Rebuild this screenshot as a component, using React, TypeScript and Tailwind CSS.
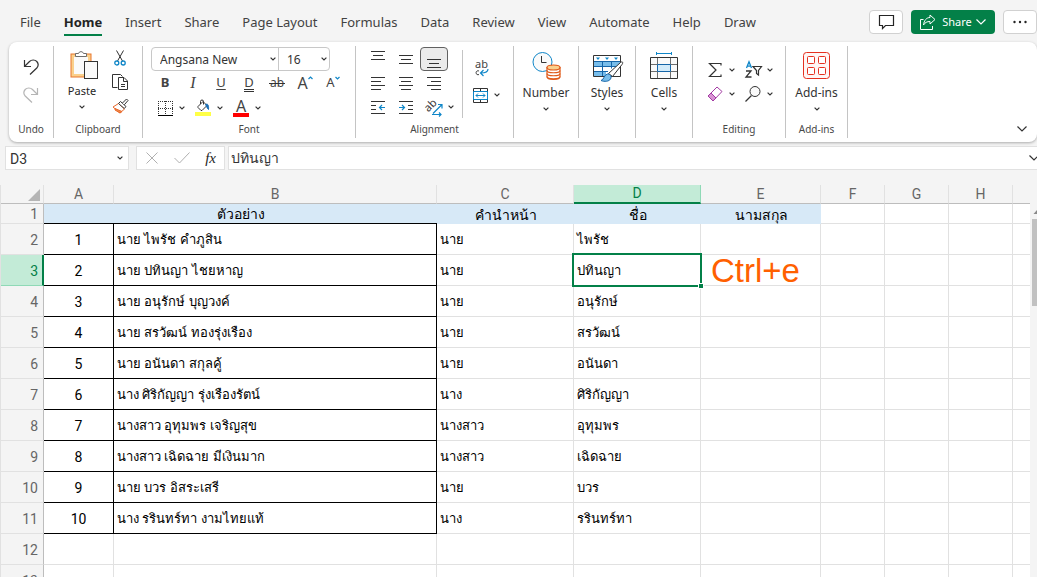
import { useState } from "react";
import type { ReactNode } from "react";

const tabs = [
  "File",
  "Home",
  "Insert",
  "Share",
  "Page Layout",
  "Formulas",
  "Data",
  "Review",
  "View",
  "Automate",
  "Help",
  "Draw",
];

const columns = ["A", "B", "C", "D", "E", "F", "G", "H"];

const people = [
  { full: "นาย ไพรัช คำภูสิน", title: "นาย", first: "ไพรัช" },
  { full: "นาย ปทินญา ไชยหาญ", title: "นาย", first: "ปทินญา" },
  { full: "นาย อนุรักษ์ บุญวงค์", title: "นาย", first: "อนุรักษ์" },
  { full: "นาย สรวัฒน์ ทองรุ่งเรือง", title: "นาย", first: "สรวัฒน์" },
  { full: "นาย อนันดา สกุลคู้", title: "นาย", first: "อนันดา" },
  { full: "นาง ศิริกัญญา รุ่งเรืองรัตน์", title: "นาง", first: "ศิริกัญญา" },
  { full: "นางสาว อุทุมพร เจริญสุข", title: "นางสาว", first: "อุทุมพร" },
  { full: "นางสาว เฉิดฉาย มีเงินมาก", title: "นางสาว", first: "เฉิดฉาย" },
  { full: "นาย บวร อิสระเสรี", title: "นาย", first: "บวร" },
  { full: "นาง รรินทร์ทา งามไทยแท้", title: "นาง", first: "รรินทร์ทา" },
];

function Svg({ w, h, children }: { w: number; h: number; children: ReactNode }) {
  return (
    <svg
      width={w}
      height={h}
      viewBox={`0 0 ${w} ${h}`}
      fill="none"
      stroke="#333"
      className="shrink-0 overflow-visible"
      aria-hidden="true"
    >
      {children}
    </svg>
  );
}

function Chevron() {
  return (
    <Svg w={6} h={4}>
      <path d="M.6 .6 3 3 5.4 .6" strokeWidth="1.2" />
    </Svg>
  );
}

function BigChevron({ color = "#333" }: { color?: string }) {
  return (
    <Svg w={10} h={6}>
      <path d="M.5 .5 5 5 9.5 .5" stroke={color} strokeWidth="1.2" />
    </Svg>
  );
}

function IconButton({
  label,
  pressed,
  children,
}: {
  label: string;
  pressed?: boolean;
  children: ReactNode;
}) {
  return (
    <button
      type="button"
      aria-label={label}
      aria-pressed={pressed}
      className={
        pressed
          ? "flex h-6 w-7 shrink-0 items-center justify-center rounded border border-[#616161] bg-[#ebebeb]"
          : "flex h-6 w-7 shrink-0 items-center justify-center rounded hover:bg-gray-100"
      }
    >
      {children}
    </button>
  );
}

function MenuButton({ label }: { label: string }) {
  return (
    <button
      type="button"
      aria-label={label}
      className="flex h-6 w-2.5 shrink-0 items-center justify-start hover:bg-gray-100"
    >
      <Chevron />
    </button>
  );
}

function Group({
  label,
  width,
  children,
}: {
  label?: string;
  width: string;
  children: ReactNode;
}) {
  return (
    <section
      className={`flex h-[92px] shrink-0 flex-col border-r border-[#c4c4c4] ${width}`}
    >
      <div className="flex h-[76px]">{children}</div>
      {label && (
        <div className="text-center text-[10px] leading-[14px] text-[#484848]">
          {label}
        </div>
      )}
    </section>
  );
}

function LargeButton({ label, children }: { label: string; children: ReactNode }) {
  return (
    <button
      type="button"
      className="flex h-[72px] w-full flex-col items-center text-xs leading-4 text-[#333]"
    >
      <span className="flex h-[39px] items-center justify-center">{children}</span>
      {label}
      <span className="flex h-4 items-center">
        <Chevron />
      </span>
    </button>
  );
}

function AlignLines({ widths, align }: { widths: number[]; align: string }) {
  return (
    <Svg w={16} h={13}>
      {widths.map((w, i) => {
        const x = align === "left" ? 1 : align === "right" ? 15 - w : 8 - w / 2;
        return <path key={i} d={`M${x} ${0.5 + i * 4}h${w}`} />;
      })}
    </Svg>
  );
}

function PasteIcon() {
  return (
    <Svg w={28} h={31}>
      <rect x="1" y="5" width="20" height="23" fill="#fad08c" stroke="#e8762c" />
      <rect x="4" y="8" width="14" height="17" fill="#fafafa" stroke="none" />
      <path
        d="M5.500 7.500V4.500H8.500a2.600 2.600 0 0 1 5 0h3v3z"
        fill="#fff"
        stroke="#6e6e6e"
      />
      <rect x="14.500" y="12.500" width="13" height="17" fill="#fafafa" />
    </Svg>
  );
}

function CutIcon() {
  return (
    <Svg w={12} h={16}>
      <path d="M2.500.5 8.500 11M9.500.5 3.500 11" />
      <circle cx="2.800" cy="13" r="2" stroke="#0f86c8" strokeWidth="1.300" />
      <circle cx="9.200" cy="13" r="2" stroke="#0f86c8" strokeWidth="1.300" />
    </Svg>
  );
}

function CopyIcon() {
  return (
    <Svg w={16} h={16}>
      <path d="M5.500 13.500h-5V.5h8l2 2" />
      <path d="M6.500 3.500h5.500l3.500 3.500v8.500h-9zM11.500 3.500V7.500h4M9 10.500h4M9 12.500h4" />
    </Svg>
  );
}

function PainterIcon() {
  return (
    <Svg w={17} h={16}>
      <path d="M1 9 6.500 5.500 12.500 11 8 15z" fill="#fff" stroke="#e8692c" />
      <path d="M3 10.500 10 13.500 8 15 3 12z" fill="#f08a4b" stroke="#e8692c" />
      <path d="M6.500 5.500 8.500 3.500 14 8.500 12.300 10.500z" fill="#fff" />
      <path d="M10.500 5 14.500 1l1.500 1.500L12.300 6.800" fill="#fff" />
    </Svg>
  );
}

function ClipboardGroup() {
  return (
    <Group label="Clipboard" width="w-[89px]">
      <button
        type="button"
        aria-label="Paste"
        className="ml-2 flex h-[70px] w-10 flex-col items-center text-[11px] leading-4 text-[#262626]"
      >
        <span className="flex h-[37px] items-end pl-1">
          <span className="h-[34px]">
            <PasteIcon />
          </span>
        </span>
        Paste
        <span className="flex h-4 items-center">
          <Chevron />
        </span>
      </button>
      <div className="ml-1 flex flex-col">
        <IconButton label="Cut">
          <CutIcon />
        </IconButton>
        <IconButton label="Copy">
          <CopyIcon />
        </IconButton>
        <IconButton label="Format Painter">
          <PainterIcon />
        </IconButton>
      </div>
    </Group>
  );
}

function FontGroup() {
  return (
    <Group label="Font" width="w-[213px]">
      <div className="flex flex-col pt-px pl-2">
        <div className="flex h-6 w-[179px] items-stretch rounded border border-[#c8c8c8] text-xs text-[#333]">
          <div className="relative w-[127px] border-r border-[#c8c8c8]">
            <select
              aria-label="Font name"
              className="h-full w-full appearance-none bg-transparent pt-0.5 pl-2 outline-none"
            >
              <option>Angsana New</option>
            </select>
            <span className="pointer-events-none absolute top-[9px] right-0.5">
              <Chevron />
            </span>
          </div>
          <div className="relative flex-1">
            <select
              aria-label="Font size"
              className="h-full w-full appearance-none bg-transparent pt-0.5 pl-2 outline-none"
            >
              <option>16</option>
            </select>
            <span className="pointer-events-none absolute top-[9px] right-0.5">
              <Chevron />
            </span>
          </div>
        </div>
        <div className="flex text-[13px] text-[#444]">
          <IconButton label="Bold">
            <b>B</b>
          </IconButton>
          <IconButton label="Italic">
            <i className="font-['Liberation_Serif',serif] text-base leading-4">I</i>
          </IconButton>
          <IconButton label="Underline">
            <span className="underline underline-offset-2">U</span>
          </IconButton>
          <IconButton label="Double underline">
            <span className="border-b-3 border-double border-[#333] leading-[14px]">
              D
            </span>
          </IconButton>
          <IconButton label="Strikethrough">
            <span className="relative text-xs">
              ab
              <span className="absolute top-1/2 -left-px h-px w-4 bg-[#333]" />
            </span>
          </IconButton>
          <IconButton label="Increase font size">
            <span className="text-base">A</span>
            <span className="-mt-2.5">
              <Svg w={5} h={4}>
                <path d="M.5 3 2.500 1l2 2" stroke="#0f86c8" strokeWidth="1.200" />
              </Svg>
            </span>
          </IconButton>
          <IconButton label="Decrease font size">
            <span>A</span>
            <span className="-mt-2.5">
              <Svg w={5} h={4}>
                <path d="M.5 1 2.500 3l2-2" stroke="#0f86c8" strokeWidth="1.200" />
              </Svg>
            </span>
          </IconButton>
        </div>
        <div className="flex pt-px">
          <IconButton label="Borders">
            <Svg w={15} h={15}>
              <path
                d="M.5 0v13M7.500 0v13M14.500 0v13M0 .5h15M0 7.500h15"
                strokeDasharray="1 1"
              />
              <path d="M0 14.500h15" stroke="#000" />
            </Svg>
          </IconButton>
          <MenuButton label="Border options" />
          <IconButton label="Fill color">
            <Svg w={16} h={16}>
              <path d="M3 6.500 8 1.500l4 4-5 5H6l-3-3z" />
              <path d="M8.500 4.500V1.500a1.500 1.500 0 0 0-3 0V4" />
              <path
                d="M10.500 4.500c2-1 3.500 0 3 5-1.500-1-1.500-2.500-3-5z"
                fill="#1a6fb5"
                stroke="#1a6fb5"
              />
              <path d="M0 14h16" stroke="#ffff46" strokeWidth="4" />
            </Svg>
          </IconButton>
          <MenuButton label="Fill color options" />
          <IconButton label="Font color">
            <span className="flex w-4 flex-col items-center border-b-4 border-[#f00] text-base leading-[13px] text-[#444]">
              A
            </span>
          </IconButton>
          <MenuButton label="Font color options" />
        </div>
      </div>
    </Group>
  );
}

function AlignmentGroup() {
  return (
    <Group label="Alignment" width="w-[158px]">
      <div className="flex w-[98px] flex-col pt-px pl-2">
        <div className="flex">
          <IconButton label="Top align">
            <span className="-mt-2">
              <Svg w={16} h={9}>
                <path d="M1 .5h14M3 4.500h10M1 8.500h14" />
              </Svg>
            </span>
          </IconButton>
          <IconButton label="Middle align">
            <Svg w={16} h={9}>
              <path d="M1 .5h14M3 4.500h10M1 8.500h14" />
            </Svg>
          </IconButton>
          <IconButton label="Bottom align" pressed>
            <span className="mt-2">
              <Svg w={16} h={9}>
                <path d="M1 .5h14M3 4.500h10M1 8.500h14" />
              </Svg>
            </span>
          </IconButton>
        </div>
        <div className="flex">
          <IconButton label="Align left">
            <AlignLines widths={[14, 10, 14, 10]} align="left" />
          </IconButton>
          <IconButton label="Center">
            <AlignLines widths={[14, 10, 14, 10]} align="center" />
          </IconButton>
          <IconButton label="Align right">
            <AlignLines widths={[14, 10, 14, 10]} align="right" />
          </IconButton>
        </div>
        <div className="flex">
          <IconButton label="Decrease indent">
            <Svg w={16} h={13}>
              <path d="M1 .5h14M1 4.500h5M1 8.500h5M1 12.500h14" />
              <path
                d="M15 6.500H9.500M12 4 9.500 6.500 12 9"
                stroke="#0f86c8"
                strokeWidth="1.200"
              />
            </Svg>
          </IconButton>
          <IconButton label="Increase indent">
            <Svg w={16} h={13}>
              <path d="M1 .5h14M10 4.500h5M10 8.500h5M1 12.500h14" />
              <path
                d="M1 6.500h5.500M4 4l2.500 2.500L4 9"
                stroke="#0f86c8"
                strokeWidth="1.200"
              />
            </Svg>
          </IconButton>
          <IconButton label="Orientation">
            <Svg w={17} h={17}>
              <text
                x="0"
                y="12"
                transform="rotate(-45 3 10)"
                fill="#333"
                stroke="none"
                fontSize="11"
              >
                ab
              </text>
              <path
                d="M7 14.500 16 5.500M12 5.500h4v4M6 15.500h9M13 13.500l2 2-2 2"
                stroke="#0f86c8"
                strokeWidth="1.200"
              />
            </Svg>
          </IconButton>
          <MenuButton label="Orientation options" />
        </div>
      </div>
      <div className="mt-1 ml-2 h-[68px] w-px bg-[#c4c4c4]" />
      <div className="flex flex-col pt-2.5 pl-1">
        <IconButton label="Wrap text">
          <Svg w={16} h={18}>
            <text x="2" y="9" fill="#444" stroke="none" fontSize="11">
              ab
            </text>
            <path d="M6 12a2 2 0 1 0 0 3.500" stroke="#444" />
            <path
              d="M15 10c0 2.500-2 4-7 4M10.500 11l-3 3 3 3"
              stroke="#0f86c8"
              strokeWidth="1.200"
            />
          </Svg>
        </IconButton>
        <div className="-ml-px flex pt-[3px]">
          <IconButton label="Merge and center">
            <Svg w={15} h={15}>
              <path d="M.5 .5h14v14H.500zM7.500 .5v3M7.500 11.500v3" />
              <path d="M.5 3.500h14v8H.500z" stroke="#0f86c8" />
              <path
                d="M3 7.500h9M5 5.500l-2 2 2 2M10 5.500l2 2-2 2"
                stroke="#0f86c8"
              />
            </Svg>
          </IconButton>
          <MenuButton label="Merge options" />
        </div>
      </div>
    </Group>
  );
}

function NumberIcon() {
  return (
    <Svg w={28} h={28}>
      <circle cx="10.500" cy="10" r="9.500" fill="#fafafa" stroke="#0f86c8" />
      <path d="M9.500 4v6.500h5" />
      <path
        d="M15 15.500v9c0 4 13 4 13 0v-9z"
        fill="#fff"
        stroke="#e05a1a"
        strokeWidth="1.200"
      />
      <path
        d="M15 18.500c0 3 13 3 13 0M15 21.500c0 3 13 3 13 0M15 24.500c0 3 13 3 13 0"
        stroke="#e05a1a"
        strokeWidth="1.200"
      />
      <ellipse
        cx="21.500"
        cy="15.500"
        rx="6.500"
        ry="2.500"
        fill="#fad08c"
        stroke="#e05a1a"
        strokeWidth="1.200"
      />
    </Svg>
  );
}

function StylesIcon() {
  return (
    <Svg w={28} h={22}>
      <path d="M.5 .5h27v21H.500z" fill="#fff" />
      <path d="M1 6.500h26v5H1zM1 16.500h12v4.500H1z" fill="#78bdea" stroke="none" />
      <path
        d="M1 6.500h26M1 11.500h24M1 16.500h14M9.500 6.500v14.500M18.500 6.500v7"
        stroke="#1565a8"
      />
      <path
        d="M3 2.500h4L5 5zM12 2.500h4L14 5zM21 2.500h4L23 5z"
        fill="#0f86c8"
        stroke="none"
      />
      <path d="M15.500 18.500 27.500 7.500c2-1.500 3 0 1.500 2L19.500 21.500z" fill="#fff" />
      <path
        d="M8 25.500c3-.5 3-6 6.500-6.500 3 0 4.500 2.500 3 5s-6 3-9.500 1.500z"
        fill="#78bdea"
        stroke="#1565a8"
      />
    </Svg>
  );
}

function CellsIcon() {
  return (
    <Svg w={28} h={27}>
      <path d="M.5 5.500h27v21H.500z" fill="#fafafa" />
      <path d="M7.500 6v20M20.500 6v20M1 12.500h26M1 19.500h26" stroke="#6e6e6e" />
      <path d="M7.500 12.500h13v7h-13z" fill="#d3ebfa" stroke="#1565a8" />
      <path d="M6.500 1.500h15M6.500 0v3M21.500 0v3" stroke="#0f86c8" />
    </Svg>
  );
}

function AddInsIcon() {
  return (
    <Svg w={28} h={27}>
      <g stroke="#e5301f">
        <rect x=".5" y=".5" width="26" height="26" rx="3" fill="#fff6f5" />
        <rect x="4.500" y="4.500" width="7" height="7" rx="1" fill="#fff" />
        <rect x="15.500" y="4.500" width="7" height="7" rx="1" fill="#fff" />
        <rect x="4.500" y="15.500" width="7" height="7" rx="1" fill="#fff" />
        <rect x="15.500" y="15.500" width="7" height="7" rx="1" fill="#fff" />
      </g>
    </Svg>
  );
}

function EditingGroup() {
  return (
    <Group label="Editing" width="w-[93px]">
      <div className="flex flex-col pt-3 pl-2">
        <div className="flex">
          <IconButton label="AutoSum">
            <Svg w={14} h={16}>
              <path
                d="M13 3.500V1.500H1.500L8 8l-6.500 6.500H13v-2"
                strokeWidth="1.200"
              />
            </Svg>
          </IconButton>
          <MenuButton label="AutoSum options" />
          <IconButton label="Sort and filter">
            <Svg w={17} h={18}>
              <path
                d="M1.500 7 4 .7 6.500 7M2.300 5.200h3.400"
                stroke="#0f86c8"
                strokeWidth="1.300"
              />
              <path d="M1 10h5L1 16H6.500" strokeWidth="1.300" />
              <path d="M8 5.500h8.500l-3 4v4.500l-2-1.500v-3z" strokeWidth="1.200" />
            </Svg>
          </IconButton>
          <MenuButton label="Sort options" />
        </div>
        <div className="flex">
          <IconButton label="Clear">
            <Svg w={16} h={16}>
              <path d="M1 10 10 1l5 4.500L6 15z" fill="#fff" stroke="#a33aa3" />
              <path d="M1 10 4 7l5 5-3 3z" fill="#d893d3" stroke="#a33aa3" />
            </Svg>
          </IconButton>
          <MenuButton label="Clear options" />
          <IconButton label="Find">
            <Svg w={16} h={16}>
              <circle cx="10" cy="5.500" r="5" fill="#fafafa" />
              <path d="M6.500 9.500.5 15.500" strokeWidth="1.200" />
            </Svg>
          </IconButton>
          <MenuButton label="Find options" />
        </div>
      </div>
    </Group>
  );
}

function Ribbon() {
  return (
    <div className="ml-[9px] flex h-[100px] shrink-0 rounded-lg bg-white pt-1 shadow-[0_1px_3px_rgba(0,0,0,0.3)]">
      <Group label="Undo" width="w-[45px]">
        <div className="flex flex-col gap-1 pt-[9px] pl-2">
          <IconButton label="Undo">
            <Svg w={16} h={18}>
              <path
                d="M1.500 2v6.500H8M1.500 8.500 6.500 3.500c2-2 5.500-2 7.300 0 1.700 2 1.700 4.500 0 6.500L7 16.500"
                strokeWidth="1.200"
              />
            </Svg>
          </IconButton>
          <IconButton label="Redo">
            <Svg w={16} h={18}>
              <path
                d="M14.500 2v6.500H8M14.500 8.500 9.500 3.500c-2-2-5.500-2-7.300 0-1.700 2-1.700 4.500 0 6.500L9 16.500"
                stroke="#b5b5b5"
                strokeWidth="1.200"
              />
            </Svg>
          </IconButton>
        </div>
      </Group>
      <ClipboardGroup />
      <FontGroup />
      <AlignmentGroup />
      <Group width="w-[65px]">
        <LargeButton label="Number">
          <NumberIcon />
        </LargeButton>
      </Group>
      <Group width="w-[57px]">
        <LargeButton label="Styles">
          <StylesIcon />
        </LargeButton>
      </Group>
      <Group width="w-[57px]">
        <LargeButton label="Cells">
          <CellsIcon />
        </LargeButton>
      </Group>
      <EditingGroup />
      <Group label="Add-ins" width="w-[62px]">
        <LargeButton label="Add-ins">
          <AddInsIcon />
        </LargeButton>
      </Group>
      <button
        type="button"
        aria-label="Collapse ribbon"
        className="mr-2.5 mb-2.5 ml-auto self-end"
      >
        <BigChevron />
      </button>
    </div>
  );
}

function TopBar() {
  return (
    <header className="flex h-[42px] shrink-0 items-start justify-between">
      <nav className="flex gap-[23px] pt-3 pl-5 text-[13px] leading-5 text-[#424242]">
        {tabs.map((tab) => (
          <a
            key={tab}
            href="#"
            className={
              tab === "Home"
                ? "border-b-2 border-[#038048] pb-0.5 font-bold whitespace-nowrap text-[#242424]"
                : "pb-0.5 whitespace-nowrap"
            }
          >
            {tab}
          </a>
        ))}
      </nav>
      <div className="flex shrink-0 gap-2 pt-2.5">
        <button
          type="button"
          aria-label="Comments"
          className="flex h-6 w-[34px] items-center justify-center rounded border border-[#d1d1d1] bg-white"
        >
          <Svg w={15} h={14}>
            <path
              d="M.5 .5h14v10H6.500l-3 3v-3h-3z"
              stroke="#242424"
              strokeWidth="1.200"
            />
          </Svg>
        </button>
        <button
          type="button"
          className="flex h-6 w-[84px] items-center justify-center gap-1 rounded bg-[#038048] text-xs text-white"
        >
          <Svg w={16} h={16}>
            <path d="M3.500 5.500h-3v10h12V12" stroke="#fff" />
            <path
              d="M10 1 15 5.500l-5 4.500V7.500c-3 0-5 1-6.500 3.500C4 6.500 6.500 3.500 10 3.500z"
              stroke="#fff"
            />
          </Svg>
          <span className="pl-0.5 text-[11px]">Share</span>
          <BigChevron color="#fff" />
        </button>
        <button
          type="button"
          aria-label="More options"
          className="flex h-6 w-[34px] items-center justify-center rounded border border-[#d1d1d1] bg-white"
        >
          <Svg w={14} h={4}>
            <g fill="#242424" stroke="none">
              <circle cx="1.500" cy="2" r="1.200" />
              <circle cx="7" cy="2" r="1.200" />
              <circle cx="12.500" cy="2" r="1.200" />
            </g>
          </Svg>
        </button>
      </div>
    </header>
  );
}

function FormulaBar() {
  const [formula, setFormula] = useState("ปทินญา");

  return (
    <div className="mt-1 flex h-6 shrink-0 pl-[5px]">
      <div className="flex w-[124px] items-center border border-[#e1e1e1] bg-white pr-[5px]">
        <input
          aria-label="Name box"
          defaultValue="D3"
          className="w-0 flex-1 pt-px pl-1 font-[Roboto,sans-serif] text-sm text-[#333] outline-none"
        />
        <Chevron />
      </div>
      <div className="ml-[7px] flex w-[89px] items-center justify-between border border-[#e1e1e1] bg-white pr-2 pl-[9px]">
        <button type="button" aria-label="Cancel">
          <Svg w={12} h={12}>
            <path d="M.5 .5l11 11M11.500 .5l-11 11" stroke="#b0b0b0" />
          </Svg>
        </button>
        <button type="button" aria-label="Enter">
          <Svg w={16} h={12}>
            <path d="M.5 6 5.500 11 15.500 .5" stroke="#b0b0b0" />
          </Svg>
        </button>
        <button
          type="button"
          aria-label="Insert function"
          className="font-['Liberation_Serif',serif] text-[15px] leading-5 text-[#262626] italic"
        >
          fx
        </button>
      </div>
      <div className="ml-[3px] flex flex-1 items-center border border-r-0 border-[#e1e1e1] bg-white">
        <input
          aria-label="Formula bar"
          value={formula}
          onChange={(e) => setFormula(e.target.value)}
          className="w-0 flex-1 pl-0.5 text-sm text-[#333] outline-none"
        />
        <button type="button" aria-label="Expand formula bar" className="-mr-0.5">
          <BigChevron />
        </button>
      </div>
    </div>
  );
}

function RowHeader({ n, selected }: { n: number; selected?: boolean }) {
  return (
    <th
      scope="row"
      className={
        selected
          ? "border-r-2 border-b border-b-[#8fd9b6] border-r-[#038048] bg-[#c3ebd7] pt-0.5 pr-1 pb-0 text-right font-[Roboto,sans-serif] text-sm leading-[17px] font-normal text-[#038048]"
          : "border-r border-b border-r-[#bdbdbd] border-b-[#e1e1e1] bg-[#f4f4f4] pt-0.5 pr-[5px] pb-0 text-right font-[Roboto,sans-serif] text-sm leading-[17px] font-normal text-[#666]"
      }
    >
      {n}
    </th>
  );
}

function Sheet() {
  const line = "border-r border-b border-[#e1e1e1]";
  const boxed = "border-r border-b border-black";
  const thai =
    "font-['Liberation_Serif',serif] text-[13px] leading-5 whitespace-nowrap pt-0.5 pr-0 pb-0 pl-[3px]";

  return (
    <div className="mt-[15px] flex min-h-0 flex-1 overflow-hidden border-l border-[#e1e1e1]">
      <table className="w-0 flex-1 table-fixed border-separate border-spacing-0 self-start bg-white text-black">
        <colgroup>
          <col className="w-[43px]" />
          <col className="w-[70px]" />
          <col className="w-[323px]" />
          <col className="w-[137px]" />
          <col className="w-[127px]" />
          <col className="w-[120px]" />
          <col className="w-16" />
          <col className="w-16" />
          <col className="w-16" />
          <col />
        </colgroup>
        <thead>
          <tr className="h-[19px] font-[Roboto,sans-serif] text-sm leading-[17px] text-[#666]">
            <td className="border-r border-b border-r-[#e1e1e1] border-b-[#bdbdbd] bg-[#f4f4f4] p-0">
              <div className="flex justify-end pt-0.5 pr-[3px]">
                <Svg w={12} h={12}>
                  <path d="M12 0v12H0z" fill="#b5b5b5" stroke="none" />
                </Svg>
              </div>
            </td>
            {columns.map((col) => (
              <th
                key={col}
                scope="col"
                className={
                  col === "D"
                    ? "border-r border-b-2 border-r-[#8fd9b6] border-b-[#038048] bg-[#c3ebd7] p-0 font-normal text-[#038048]"
                    : "border-r border-b border-r-[#e1e1e1] border-b-[#bdbdbd] bg-[#f4f4f4] p-0 font-normal"
                }
              >
                {col}
              </th>
            ))}
            <td className="border-b border-[#bdbdbd] bg-[#f4f4f4]" />
          </tr>
        </thead>
        <tbody>
          <tr className="h-5 text-center text-sm leading-[19px]">
            <RowHeader n={1} />
            <td colSpan={2} className="border-b border-black bg-[#d7e9f7] p-0">
              ตัวอย่าง
            </td>
            <td className="bg-[#d7e9f7] p-0">คำนำหน้า</td>
            <td className="bg-[#d7e9f7] p-0">ชื่อ</td>
            <td className="bg-[#d7e9f7] p-0">นามสกุล</td>
            <td className={line} />
            <td className={line} />
            <td className={line} />
            <td className="border-b border-[#e1e1e1]" />
          </tr>
          {people.map((person, i) => {
            const active = i === 1;
            return (
              <tr key={person.full} className="h-[31px]">
                <RowHeader n={i + 2} selected={active} />
                <td
                  className={`${boxed} px-0 pt-0.5 pb-0 text-center font-[Roboto,sans-serif] text-sm`}
                >
                  {i + 1}
                </td>
                <td className={`${boxed} ${thai}`}>{person.full}</td>
                <td className={`${line} ${thai}`}>{person.title}</td>
                <td className={`${line} ${thai} relative`}>
                  {person.first}
                  {active && (
                    <span className="absolute -inset-0.5 z-10 border-2 border-[#038048]">
                      <span className="absolute -right-1 -bottom-1 size-[6px] border border-white bg-[#038048]" />
                    </span>
                  )}
                </td>
                <td className={`${line} relative p-0`}>
                  {active && (
                    <span className="absolute top-0 left-2.5 font-['Liberation_Sans',sans-serif] text-[33px] leading-8 text-[#ff6000]">
                      Ctrl+e
                    </span>
                  )}
                </td>
                <td className={line} />
                <td className={line} />
                <td className={line} />
                <td className="border-b border-[#e1e1e1]" />
              </tr>
            );
          })}
          {[12, 13].map((n) => (
            <tr key={n} className="h-[31px]">
              <RowHeader n={n} />
              {columns.map((col) => (
                <td key={col} className={line} />
              ))}
              <td className="border-b border-[#e1e1e1]" />
            </tr>
          ))}
        </tbody>
      </table>
      <div className="flex w-[7px] shrink-0 flex-col overflow-hidden pt-[25px] pl-0.5">
        <Svg w={8} h={4}>
          <path d="M1.500 4 5 0l3.500 4z" fill="#8a8a8a" stroke="none" />
        </Svg>
        <div className="mt-[5px] h-[87px] w-4 bg-[#c1c1c1]" />
      </div>
    </div>
  );
}

export default function App() {
  return (
    <main className="flex h-screen flex-col overflow-hidden bg-[#f4f4f4] font-['Noto_Sans',sans-serif]">
      <TopBar />
      <Ribbon />
      <FormulaBar />
      <Sheet />
    </main>
  );
}
